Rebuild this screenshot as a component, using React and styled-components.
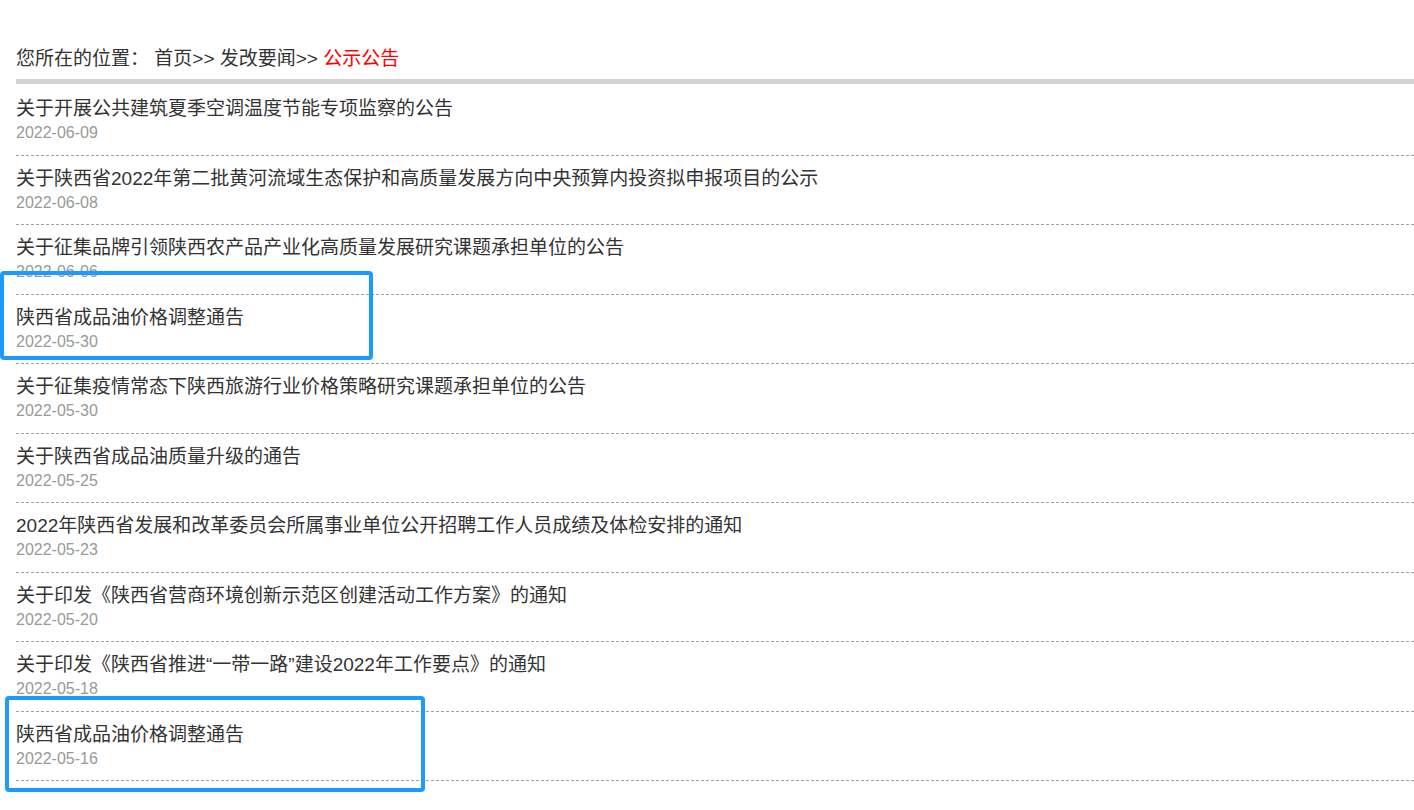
import React from "react";
import styled, { createGlobalStyle } from "styled-components";

const Global = createGlobalStyle`
  html, body { margin: 0; padding: 0; background: #fff; }
  body { font-family: "Liberation Sans", "Noto Sans CJK SC", sans-serif; color: #333; }
`;

const Page = styled.div`
  position: relative;
  padding: 44px 0 0 16px;
  width: 1398px;
`;

const Crumbs = styled.div`
  font-size: 19px;
  line-height: 30px;
  height: 30px;
  color: #333;
  white-space: nowrap;
`;

const Current = styled.span`
  color: #f00;
`;

const Bar = styled.div`
  margin-top: 5px;
  height: 5px;
  background: #d3d3d3;
`;

const List = styled.ul`
  list-style: none;
  margin: 2px 0 0;
  padding: 0;
`;

const Item = styled.li`
  padding: 10px 0 9.5px;
  border-bottom: 1px dashed #a0a0a0;
`;

const Title = styled.div`
  font-size: 19px;
  line-height: 25px;
  color: #333;
  white-space: nowrap;
`;

const DateText = styled.div`
  font-size: 16px;
  line-height: 24px;
  color: #999;
`;

const Highlight = styled.div`
  position: absolute;
  box-sizing: border-box;
  border: 4px solid #1a9bfd;
  border-radius: 4px;
  pointer-events: none;
`;

const items = [
  ["关于开展公共建筑夏季空调温度节能专项监察的公告", "2022-06-09"],
  ["关于陕西省2022年第二批黄河流域生态保护和高质量发展方向中央预算内投资拟申报项目的公示", "2022-06-08"],
  ["关于征集品牌引领陕西农产品产业化高质量发展研究课题承担单位的公告", "2022-06-06"],
  ["陕西省成品油价格调整通告", "2022-05-30"],
  ["关于征集疫情常态下陕西旅游行业价格策略研究课题承担单位的公告", "2022-05-30"],
  ["关于陕西省成品油质量升级的通告", "2022-05-25"],
  ["2022年陕西省发展和改革委员会所属事业单位公开招聘工作人员成绩及体检安排的通知", "2022-05-23"],
  ["关于印发《陕西省营商环境创新示范区创建活动工作方案》的通知", "2022-05-20"],
  ["关于印发《陕西省推进“一带一路”建设2022年工作要点》的通知", "2022-05-18"],
  ["陕西省成品油价格调整通告", "2022-05-16"],
];

const boxes = [
  { left: 0, top: 271, width: 373, height: 89 },
  { left: 5, top: 696, width: 420, height: 96 },
];

export default function App() {
  return (
    <>
      <Global />
      <Page>
        <Crumbs>
          您所在的位置： 首页&gt;&gt; 发改要闻&gt;&gt; <Current>公示公告</Current>
        </Crumbs>
        <Bar />
        <List>
          {items.map(([t, d], i) => (
            <Item key={i}>
              <Title>{t}</Title>
              <DateText>{d}</DateText>
            </Item>
          ))}
        </List>
      </Page>
      {boxes.map((b, i) => (
        <Highlight key={i} style={b} />
      ))}
    </>
  );
}
